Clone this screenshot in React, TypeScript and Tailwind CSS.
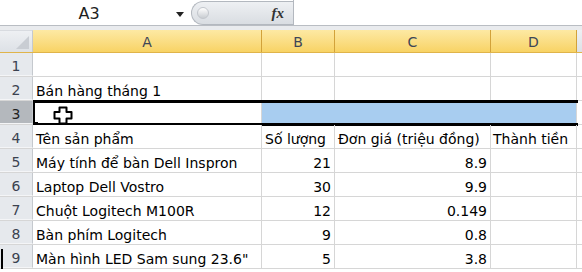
import React from "react";

const COLS = [
  { key: "A", w: "w-[229px]" },
  { key: "B", w: "w-[73px]" },
  { key: "C", w: "w-[156px]" },
  { key: "D", w: "w-[86px]" },
];

type Row = { n: number; a?: string; b?: string; c?: string; d?: string; headerRow?: boolean };

const rows: Row[] = [
  { n: 1 },
  { n: 2, a: "Bán hàng tháng 1" },
  { n: 3 },
  { n: 4, a: "Tên sản phẩm", b: "Số lượng", c: "Đơn giá (triệu đồng)", d: "Thành tiền", headerRow: true },
  { n: 5, a: "Máy tính để bàn Dell Inspron", b: "21", c: "8.9" },
  { n: 6, a: "Laptop Dell Vostro", b: "30", c: "9.9" },
  { n: 7, a: "Chuột Logitech M100R", b: "12", c: "0.149" },
  { n: 8, a: "Bàn phím Logitech", b: "9", c: "0.8" },
  { n: 9, a: "Màn hình LED Sam sung 23.6\"", b: "5", c: "3.8" },
];

function Cursor() {
  return (
    <svg width="20" height="19" viewBox="0 0 20 19" className="absolute left-[53px] top-[5px]">
      <path
        d="M6.5 1.5 H13.5 V6 H18.5 V12.5 H13.5 V17.5 H6.5 V12.5 H1.5 V6 H6.5 Z"
        fill="#ffffff"
        stroke="#000000"
        strokeWidth="2"
        strokeLinejoin="round"
      />
    </svg>
  );
}

export default function App() {
  return (
    <div className="w-[582px] h-[272px] overflow-hidden bg-white text-black" style={{ fontFamily: '"DejaVu Sans", sans-serif' }}>
      {/* formula bar */}
      <div className="flex h-[26px] border-b border-[#b9bdc3] bg-white">
        <div className="relative w-[191px] h-full">
          <div className="w-[178px] h-full flex items-center justify-center text-[16px] text-[#1e1e1e] pt-[2px]">A3</div>
          <svg width="8" height="5" viewBox="0 0 8 5" className="absolute left-[176px] top-[12px]">
            <path d="M0 0 H8 L4 5 Z" fill="#222" />
          </svg>
        </div>
        <div className="relative w-[102px] h-[24px] mt-[1px] rounded-l-full border border-r-0 border-[#b3b8bf] bg-gradient-to-b from-[#eef0f3] to-[#d9dde2] flex items-center justify-end pr-[9px]">
          <div className="absolute left-[5px] top-[5px] w-[12px] h-[12px] rounded-full bg-gradient-to-b from-[#ffffff] to-[#c9cdd2] border border-[#c2c6cc]" />
          <span className="text-[15px] italic font-bold text-[#333]" style={{ fontFamily: '"Liberation Serif", serif' }}>fx</span>
        </div>
        <div className="flex-1 border-l border-[#b3b8bf]" />
      </div>
      <div className="h-[4px] bg-[#e9ebee]" />

      {/* column headers */}
      <div className="flex h-[23px] border-b border-[#e0b44a]">
        <div className="relative w-[33px] h-full bg-gradient-to-b from-[#eef0f3] to-[#dde1e6] border-r border-[#c5c9ce] border-t border-t-[#d8dbe0]">
          <div
            className="absolute right-[3px] bottom-[3px] w-[13px] h-[13px] bg-[#c9cdd3]"
            style={{ clipPath: "polygon(100% 0, 100% 100%, 0 100%)" }}
          />
        </div>
        {COLS.map((c) => (
          <div
            key={c.key}
            className={`${c.w} h-full border-r border-[#d2a23a] bg-gradient-to-b from-[#fde9a3] to-[#f8d364] flex items-end justify-center pb-[2px] text-[14px] leading-4 text-[#3e4656]`}
          >
            {c.key}
          </div>
        ))}
        <div className="flex-1 h-full bg-gradient-to-b from-[#eef0f3] to-[#dde1e6]" />
      </div>

      {/* rows */}
      {rows.map((r) => {
        const sel = r.n === 3;
        const cellBase = "h-full border-r border-[#d6d6d6] flex items-end pb-[1px] text-[14px] leading-4 whitespace-nowrap overflow-visible";
        return (
          <div key={r.n} className="relative flex h-[24px] border-b border-[#d6d6d6]">
            <div
              className={`w-[33px] h-full flex items-end justify-center pb-[1px] text-[14px] leading-4 border-r border-[#c5c9ce] ${
                sel ? "bg-[#b4b8bd] text-[#222]" : "bg-[#e6e9ed] text-[#3b4250]"
              } border-b border-b-[#f4f5f7]`}
            >
              {r.n}
            </div>
            <div className={`w-[229px] ${cellBase} pl-[3px] bg-white`}>{r.a}</div>
            <div className={`w-[73px] ${cellBase} ${r.headerRow ? "pl-[3px]" : "justify-end pr-[3px]"} ${sel ? "bg-[#a8cdf0] border-r-[#a8cdf0]" : ""}`}>
              {r.b}
            </div>
            <div className={`w-[156px] ${cellBase} ${r.headerRow ? "pl-[3px]" : "justify-end pr-[3px]"} ${sel ? "bg-[#a8cdf0] border-r-[#a8cdf0]" : ""}`}>
              {r.c}
            </div>
            <div className={`w-[86px] ${cellBase} pl-[2px] ${sel ? "bg-[#a8cdf0]" : ""}`}>{r.d}</div>
            <div className="flex-1 h-full" />
            {sel && (
              <>
                <div className="absolute left-[33px] top-[-1px] w-[545px] h-[26px] border-y-[3px] border-l-[2px] border-black pointer-events-none" />
                <div className="absolute left-[33px] top-[21px] w-[5px] h-[5px] bg-black" />
                <Cursor />
              </>
            )}
            {r.n === 9 && <div className="absolute left-[1px] top-[4px] w-[2px] h-[20px] bg-black" />}
          </div>
        );
      })}
    </div>
  );
}
